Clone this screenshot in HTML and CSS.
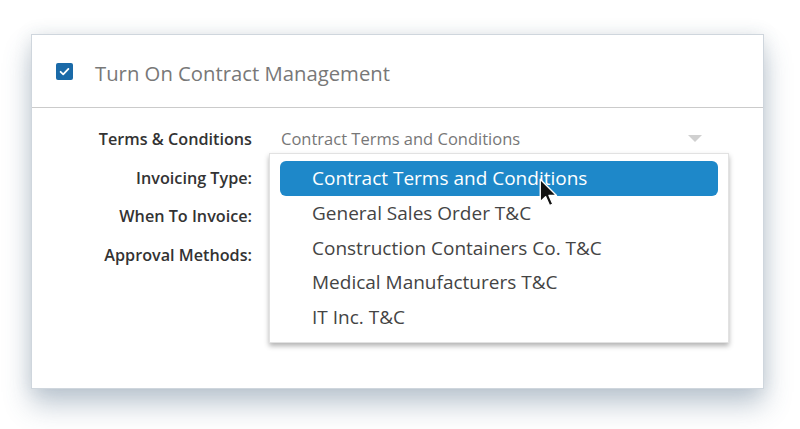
FILE: index.html
```html
<!DOCTYPE html>
<html lang="en">
<head>
  <meta charset="UTF-8" />
  <title>Contract Management</title>
  <link rel="stylesheet" href="styles.css">
</head>
<body>
  <div class="card">
    <div class="card-head">
      <span class="check">
        <svg viewBox="0 0 17 17" width="17" height="17"><path d="M4.6 8.8l2.6 2.5 5.2-5.4" fill="none" stroke="#fff" stroke-width="1.8" stroke-linecap="round" stroke-linejoin="round"/></svg>
      </span>
      <span class="title">Turn On Contract Management</span>
    </div>

    <div class="form">
      <label class="lbl">Terms &amp; Conditions</label>
      <div class="field">
        <div class="select">
          <span>Contract Terms and Conditions</span>
          <span class="caret"></span>
        </div>
        <ul class="menu">
          <li class="active">Contract Terms and Conditions</li>
          <li>General Sales Order T&amp;C</li>
          <li>Construction Containers Co. T&amp;C</li>
          <li>Medical Manufacturers T&amp;C</li>
          <li>IT Inc. T&amp;C</li>
        </ul>
        <svg class="cursor" viewBox="0 0 16 24" width="20" height="30">
          <path d="M1 1 L1 19 L5.3 15 L8.4 22 L11 20.8 L8 14 L14 14 Z" fill="#111" stroke="#fff" stroke-width="1.1" stroke-linejoin="round"/>
        </svg>
      </div>

      <label class="lbl">Invoicing Type:</label>
      <div class="field"></div>

      <label class="lbl">When To Invoice:</label>
      <div class="field"></div>

      <label class="lbl">Approval Methods:</label>
      <div class="field"></div>
    </div>
  </div>
</body>
</html>
```

FILE: styles.css
```css
/* === Base === */
html,body{height:100%}
body{
  margin:0;
  padding:34px 0 0 31px;
  box-sizing:border-box;
  background:#fff;
  font-family:"Open Sans",sans-serif;
  color:#333;
  overflow:hidden;
}

/* === Card === */
.card{
  width:731px;
  height:353px;
  background:#fff;
  border:1px solid #cfd6dd;
  box-shadow:0 16px 26px rgba(60,90,120,.32),0 0 16px rgba(90,110,130,.14);
}
.card-head{
  height:72px;
  display:flex;
  align-items:center;
  padding-left:24px;
  gap:22px;
  border-bottom:1px solid #cbcbcb;
}
.check{
  width:17px;height:17px;
  border-radius:2px;
  background:#1a6aa8;
  display:flex;
}
.title{font-size:20.3px;color:#787878;padding-top:4px}

/* === Form rows === */
.form{
  display:grid;
  grid-template-columns:220px 456px;
  grid-auto-rows:38.5px;
  column-gap:19px;
  padding-top:12px;
}
.lbl{
  text-align:right;
  font-size:16.2px;
  font-weight:600;
  color:#333;
  line-height:38px;
}
.field{position:relative}

/* === Select === */
.select{
  height:30px;
  margin-top:3px;
  border-bottom:1px dashed #b9b9b9;
  display:flex;
  align-items:center;
  justify-content:space-between;
  padding:0 25px 0 10px;
  font-size:16.5px;
  color:#777;
}
.caret{
  width:0;height:0;
  border-left:7px solid transparent;
  border-right:7px solid transparent;
  border-top:7px solid #d0d0d0;
}

/* === Dropdown menu === */
.menu{
  position:absolute;
  top:33px;left:-2px;
  width:438px;
  margin:0;
  padding:7px 10px 8px;
  list-style:none;
  background:#fff;
  border:1px solid #e2e2e2;
  box-shadow:0 3px 5px rgba(0,0,0,.3);
  z-index:5;
}
.menu li{
  height:34.5px;
  line-height:34px;
  padding-left:32px;
  font-size:19px;
  color:#444;
  border-radius:6px;
}
.menu li.active{background:#1e88c9;color:#fff;height:35px}

.cursor{position:absolute;left:268px;top:58px;z-index:6}
```
